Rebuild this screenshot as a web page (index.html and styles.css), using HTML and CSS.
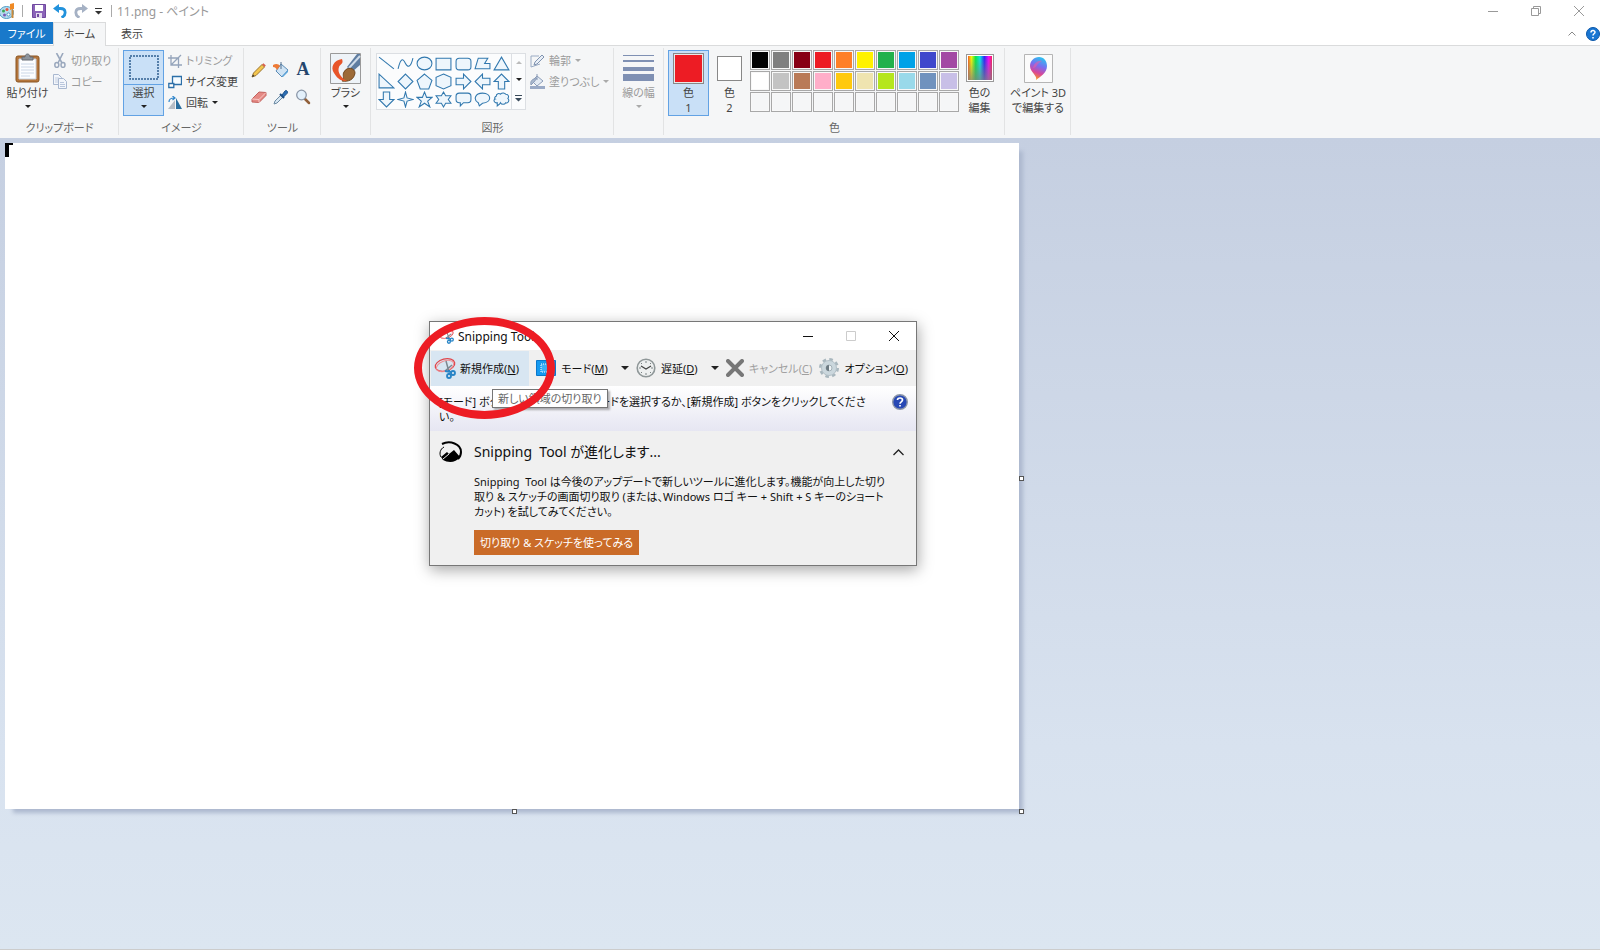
FILE: index.html
```html
<!DOCTYPE html>
<html lang="ja">
<head>
  <meta charset="UTF-8" />
  <meta name="viewport" content="width=device-width, initial-scale=1.0"/>
  <title>11.png - ペイント</title>
  <link rel="stylesheet" href="styles.css">
</head>
<body>

<header class="titlebar">
  <svg class="app-icon" width="16" height="18" viewBox="0 0 16 18">
    <ellipse cx="6.5" cy="10.5" rx="7" ry="6" fill="#b7dbee" stroke="#4d9cc6"/>
    <circle cx="3.5" cy="9" r="1.5" fill="#3aa655"/><circle cx="7" cy="7.5" r="1.5" fill="#e5533c"/>
    <circle cx="4.5" cy="13" r="1.5" fill="#7c58b5"/><circle cx="8.5" cy="12.5" r="1.6" fill="#fff" stroke="#4d9cc6"/>
    <path d="M12.5 8v8" stroke="#c98a3d" stroke-width="2"/><path d="M10 2l4-1v6l-4 1z" fill="#f08a24"/>
  </svg>
  <span class="divider"></span>
  <button class="quick" aria-label="保存">
    <svg width="14" height="14" viewBox="0 0 14 14"><path d="M.5 .5h13v13H.5z" fill="#8a63b8" stroke="#70499f"/><path d="M3 1h8v6H3z" fill="#fff"/><path d="M4 9h6v5H4z" fill="#e4dcee"/><path d="M5 10h2v3H5z" fill="#70499f"/></svg>
  </button>
  <button class="quick" aria-label="元に戻す">
    <svg width="14" height="14" viewBox="0 0 14 14"><path d="M3 4.500h4.500c6 0 6 7 1 9" fill="none" stroke="#2292dc" stroke-width="2.800"/><path d="M0 4.500L6 0v9z" fill="#2292dc"/></svg>
  </button>
  <button class="quick" aria-label="やり直し">
    <svg width="14" height="14" viewBox="0 0 14 14"><path d="M11 4.500H6.500c-6 0-6 7-1 9" fill="none" stroke="#a5b1c4" stroke-width="2.800"/><path d="M14 4.500L8 0v9z" fill="#a5b1c4"/></svg>
  </button>
  <button class="quick narrow" aria-label="カスタマイズ">
    <svg width="7" height="7" viewBox="0 0 7 7"><path d="M0 0h7v1H0zM0 3h7L3.500 6.500z" fill="#333"/></svg>
  </button>
  <span class="divider"></span>
  <span class="doc-title">11.png - ペイント</span>
  <div class="window-buttons">
    <button aria-label="最小化"><svg width="10" height="10" viewBox="0 0 10 10"><path d="M0 5.500h10"/></svg></button>
    <button aria-label="元のサイズ"><svg width="10" height="10" viewBox="0 0 10 10"><path d="M.5 2.500h7v7h-7zM2.500 2.500v-2h7v7h-2"/></svg></button>
    <button aria-label="閉じる"><svg width="10" height="10" viewBox="0 0 10 10"><path d="M0 0l10 10M10 0L0 10"/></svg></button>
  </div>
</header>

<nav class="tabs">
  <button class="tab file">ファイル</button>
  <button class="tab active">ホーム</button>
  <button class="tab">表示</button>
  <div class="tabs-right">
    <button aria-label="リボンの折りたたみ"><svg width="8" height="5" viewBox="0 0 8 5"><path d="M.5 4.500L4 1l3.500 3.500" fill="none" stroke="#888"/></svg></button>
    <button aria-label="ヘルプ"><svg width="14" height="14" viewBox="0 0 14 14"><circle cx="7" cy="7" r="6.500" fill="#1976d2" stroke="#0b57a8"/><path d="M5 5.500C5 3 9 3 9 5.300 9 6.800 7 6.800 7 8.500M7 10v1.500" fill="none" stroke="#fff" stroke-width="1.500"/></svg></button>
  </div>
</nav>

<section class="ribbon">
  <div class="group clipboard">
    <div class="group-body">
      <button class="big">
        <span class="big-icon"><svg width="26" height="30" viewBox="0 0 26 30"><rect x="1" y="3" width="23" height="26" rx="2" fill="#b5763c" stroke="#8a5522"/><path d="M4 6h17v20H4z" fill="#fcfdff" stroke="#c9d2df"/><path d="M6 11h13M6 14h13M6 17h13M6 20h13M6 23h9" stroke="#cbd6e6"/><path d="M7 7V4h3c0-4 5-4 5 0h3v3z" fill="#8d949c" stroke="#666c74"/></svg></span>
        <span>貼り付け</span>
        <i class="caret"></i>
      </button>
      <div class="rows">
        <button class="row off"><svg width="14" height="15" viewBox="0 0 14 15"><path d="M3.500 0L9 10M10 0L5 10" stroke="#9aa8bd" stroke-width="1.600"/><ellipse cx="3.800" cy="12" rx="2" ry="2.400" fill="none" stroke="#9aa8bd" stroke-width="1.500"/><ellipse cx="10" cy="12" rx="2" ry="2.400" fill="none" stroke="#9aa8bd" stroke-width="1.500"/></svg>切り取り</button>
        <button class="row off"><svg width="14" height="15" viewBox="0 0 14 15"><path d="M.5 .5h5l3 3v7h-8z" fill="#f3f6fb" stroke="#a9b8d0"/><path d="M2 4h4M2 6h4M2 8h3" stroke="#c5d0e2"/><path d="M5.500 4.500h5l3 3v7h-8z" fill="#f3f6fb" stroke="#a9b8d0"/><path d="M7 8.500h4M7 10.500h5M7 12.500h5" stroke="#b9c6dc"/></svg>コピー</button>
      </div>
    </div>
    <div class="group-name">クリップボード</div>
  </div>

  <div class="group image">
    <div class="group-body">
      <button class="big selected split">
        <span class="big-icon"><svg width="30" height="25" viewBox="0 0 30 25"><path d="M1 1h28v23H1z" fill="none" stroke="#2f5f91" stroke-width="1.500" stroke-dasharray="2 1"/></svg></span>
        <span>選択</span>
        <i class="caret"></i>
      </button>
      <div class="rows">
        <button class="row off"><svg width="14" height="14" viewBox="0 0 14 14"><path d="M3 1v10h11M0 4h10.500v10M3 11L13 1" fill="none" stroke="#94a4bb" stroke-width="1.300"/></svg>トリミング</button>
        <button class="row"><svg width="14" height="14" viewBox="0 0 14 14"><path d="M4.500 1.500h9v8h-9z" fill="#f5fbff" stroke="#2c6fa8" stroke-width="1.300"/><path d="M.8 8.500h5v4h-5z" fill="#fff" stroke="#2c6fa8" stroke-width="1.300"/></svg>サイズ変更</button>
        <button class="row"><svg width="14" height="14" viewBox="0 0 14 14"><path d="M7 4v9H0z" fill="#b7bdc5"/><path d="M8 2l6 11H8z" fill="#2c6f9f"/><path d="M1 6c0-3 2-4 5-4M4.500 0L7 2 4.500 4" fill="none" stroke="#3186cb" stroke-width="1.200"/></svg>回転<i class="caret"></i></button>
      </div>
    </div>
    <div class="group-name">イメージ</div>
  </div>

  <div class="group tools">
    <div class="group-body tool-grid">
      <button aria-label="鉛筆"><svg width="16" height="16" viewBox="0 0 16 16"><path d="M1 15l1.500-4L11 2.500l2.500 2.500L5 13.500z" fill="#f4c64e" stroke="#9a7431"/><path d="M11 2.500l1.500-1.300 2.300 2.300L13.500 5z" fill="#d8604e"/><path d="M1 15l1-2.500L3.500 14z" fill="#333"/></svg></button>
      <button aria-label="塗りつぶし"><svg width="16" height="16" viewBox="0 0 16 16"><path d="M8 2l7 6-6 7-6-6z" fill="#cfe3f4" stroke="#5b8bb5"/><path d="M0 3c3-2 6-1 7 1L4 8c-1-2-2-3-4-3z" fill="#ee7a35"/><path d="M8 0v7" stroke="#55718e"/><path d="M9 14l6-6v2l-5 5z" fill="#5ca5dc"/></svg></button>
      <button class="letter" aria-label="テキスト">A</button>
      <button aria-label="消しゴム"><svg width="16" height="16" viewBox="0 0 16 16"><path d="M1 10l7-7 7 .5v3l-7 7-7-.5z" fill="#e58984" stroke="#c2635f"/><path d="M1 10l7 .5 7-7M8 10.500v3" fill="none" stroke="#f7c8c5"/></svg></button>
      <button aria-label="色の選択"><svg width="16" height="16" viewBox="0 0 16 16"><path d="M1 15l1-3 6-6 2 2-6 6z" fill="#d8e7f2" stroke="#6d8ba4"/><path d="M7 5l4 4" stroke="#1c4f86" stroke-width="2"/><path d="M9 6l3-4c1-1.500 3.500.5 2.200 2.300L10.500 8z" fill="#2a6db5" stroke="#1c4f86"/></svg></button>
      <button aria-label="拡大鏡"><svg width="16" height="16" viewBox="0 0 16 16"><path d="M10 10l4 4" stroke="#91603a" stroke-width="2.500" stroke-linecap="round"/><circle cx="6.500" cy="6" r="4.800" fill="#e3f0fb" stroke="#8b97a8" stroke-width="1.300"/></svg></button>
    </div>
    <div class="group-name">ツール</div>
  </div>

  <div class="group brush">
    <div class="group-body">
      <button class="big">
        <span class="big-icon"><svg width="31" height="31" viewBox="0 0 31 31"><path d="M.5 .5h30v30H.5z" fill="#eef3f8" stroke="#9a9a9a"/><path d="M30 4v8l-8 7-5-5L27 1h3z" fill="#5f7da1"/><path d="M30 3L19 15" stroke="#cfdcea" stroke-width="2"/><path d="M14 19c3-6 11-4 11 1-1 7-7 9-13 8 3-3 0-6 2-9z" fill="#9c6a38" stroke="#714820"/><path d="M12 6C4 7 0 14 4 20c4 7 8 8 13 8-6-3-10-9-8-14 1-3 5-3 3-8z" fill="#e8552a"/></svg></span>
        <span>ブラシ</span>
        <i class="caret"></i>
      </button>
    </div>
  </div>

  <div class="group shapes">
    <div class="group-body">
      <div class="shape-box">
        <div class="shape-grid">
          <button aria-label="直線"><svg viewBox="0 0 16 16"><path d="M1 2l14 11"/></svg></button>
          <button aria-label="曲線"><svg viewBox="0 0 16 16"><path d="M1 13C4 1 6 4 8 8s5 4 7-5"/></svg></button>
          <button aria-label="楕円"><svg viewBox="0 0 16 16"><ellipse cx="8" cy="8" rx="7" ry="6"/></svg></button>
          <button aria-label="四角形"><svg viewBox="0 0 16 16"><path d="M1 3h14v11H1z"/></svg></button>
          <button aria-label="角丸四角形"><svg viewBox="0 0 16 16"><rect x="1" y="3" width="14" height="11" rx="3"/></svg></button>
          <button aria-label="多角形"><svg viewBox="0 0 16 16"><path d="M4 3h9l-3 5h5v5H1z"/></svg></button>
          <button aria-label="三角形"><svg viewBox="0 0 16 16"><path d="M8 2l7 12H1z"/></svg></button>
          <button aria-label="直角三角形"><svg viewBox="0 0 16 16"><path d="M1 1l14 13H1z"/></svg></button>
          <button aria-label="ひし形"><svg viewBox="0 0 16 16"><path d="M8 1l7 7-7 7-7-7z"/></svg></button>
          <button aria-label="五角形"><svg viewBox="0 0 16 16"><path d="M8 1l7 6-3 8H4L1 7z"/></svg></button>
          <button aria-label="六角形"><svg viewBox="0 0 16 16"><path d="M8 1l7 3v8l-7 3-7-3V4z"/></svg></button>
          <button aria-label="右矢印"><svg viewBox="0 0 16 16"><path d="M1 5h7V1l7 7-7 7v-4H1z"/></svg></button>
          <button aria-label="左矢印"><svg viewBox="0 0 16 16"><path d="M15 5H8V1L1 8l7 7v-4h7z"/></svg></button>
          <button aria-label="上矢印"><svg viewBox="0 0 16 16"><path d="M5 15V8H1l7-7 7 7h-4v7z"/></svg></button>
          <button aria-label="下矢印"><svg viewBox="0 0 16 16"><path d="M5 1v7H1l7 7 7-7h-4V1z"/></svg></button>
          <button aria-label="四方星"><svg viewBox="0 0 16 16"><path d="M8 1l1.500 5.500L15 8l-5.500 1.500L8 15l-1.500-5.500L1 8l5.500-1.500z"/></svg></button>
          <button aria-label="五方星"><svg viewBox="0 0 16 16"><path d="M8 1l2 5h5l-4 3.500 2 5.500-5-3.500L3 15l2-5.500L1 6h5z"/></svg></button>
          <button aria-label="六方星"><svg viewBox="0 0 16 16"><path d="M8 1l2 3.500h5L12.500 8l2.500 3.500h-5L8 15l-2-3.500H1L3.500 8 1 4.500h5z"/></svg></button>
          <button aria-label="角丸吹き出し"><svg viewBox="0 0 16 16"><path d="M4 2h8c2 0 3 1 3 3v3c0 2-1 3-3 3H8l-3 3v-3H4c-2 0-3-1-3-3V5c0-2 1-3 3-3z"/></svg></button>
          <button aria-label="円形吹き出し"><svg viewBox="0 0 16 16"><path d="M5 14l-1-3C-1 8 1 2 8 2c9 0 9 9 0 9.500z"/></svg></button>
          <button aria-label="雲形吹き出し"><svg viewBox="0 0 16 16"><path d="M3 5c0-3 3-3 4-2 2-2 4-1 5 0 3 0 3 3 2 4 2 2 0 5-2 4-1 2-4 2-5 0-1 2-2 2-3 3V11C1 12 0 8 2 7.500 1 7 2 5 3 5z"/></svg></button>
        </div>
        <div class="shape-scroll">
          <button class="off" aria-label="上へ"><i class="caret up"></i></button>
          <button aria-label="下へ"><i class="caret"></i></button>
          <button aria-label="その他"><svg width="7" height="7" viewBox="0 0 7 7"><path d="M0 0h7v1H0zM0 3h7L3.500 6.500z" fill="#3a4a5a"/></svg></button>
        </div>
      </div>
      <div class="rows">
        <button class="row off"><svg width="15" height="14" viewBox="0 0 15 14"><path d="M9 2H1v11l9-3" fill="none" stroke="#9aabc4"/><path d="M4 11l1-3 7-7 2 2-7 7z" fill="#e9eff7" stroke="#8093b0"/></svg>輪郭<i class="caret"></i></button>
        <button class="row off"><svg width="15" height="15" viewBox="0 0 15 15"><path d="M0 12h15v3H0z" fill="#9aaac6"/><path d="M7 2l6 5-6 5-5-5z" fill="#e3eaf3" stroke="#8b9cb8"/><path d="M1 11c-1-4 1-6 6-7L4 8zM7 0v6" fill="#a9b8ce" stroke="#8b9cb8"/></svg>塗りつぶし<i class="caret"></i></button>
      </div>
    </div>
    <div class="group-name">図形</div>
  </div>

  <div class="group line-width">
    <div class="group-body">
      <button class="big off">
        <span class="big-icon"><svg width="31" height="28" viewBox="0 0 31 28"><path d="M0 1h31v1H0zM0 6h31v2H0zM0 13h31v4H0zM0 20h31v7H0z" fill="#7f90b3"/></svg></span>
        <span>線の幅</span>
        <i class="caret"></i>
      </button>
    </div>
  </div>

  <div class="group colors">
    <div class="group-body">
      <button class="big selected"><span class="big-icon"><b class="color-chip one"></b></span><span>色</span><span>1</span></button>
      <button class="big"><span class="big-icon"><b class="color-chip two"></b></span><span>色</span><span>2</span></button>
      <div class="palette">
        <button class="black" aria-label="黒"></button><button class="gray" aria-label="灰色"></button><button class="maroon" aria-label="濃い赤"></button><button class="red" aria-label="赤"></button><button class="orange" aria-label="オレンジ"></button><button class="yellow" aria-label="黄"></button><button class="green" aria-label="緑"></button><button class="turquoise" aria-label="青緑"></button><button class="indigo" aria-label="藍色"></button><button class="purple" aria-label="紫"></button>
        <button class="white" aria-label="白"></button><button class="silver" aria-label="明るい灰色"></button><button class="brown" aria-label="茶"></button><button class="rose" aria-label="ローズ"></button><button class="gold" aria-label="金"></button><button class="cream" aria-label="薄い黄"></button><button class="lime" aria-label="ライム"></button><button class="sky" aria-label="薄い青緑"></button><button class="slate" aria-label="青灰色"></button><button class="lavender" aria-label="ラベンダー"></button>
        <button aria-label="空き"></button><button aria-label="空き"></button><button aria-label="空き"></button><button aria-label="空き"></button><button aria-label="空き"></button><button aria-label="空き"></button><button aria-label="空き"></button><button aria-label="空き"></button><button aria-label="空き"></button><button aria-label="空き"></button>
      </div>
      <button class="big"><span class="big-icon"><b class="spectrum"></b></span><span>色の</span><span>編集</span></button>
    </div>
    <div class="group-name">色</div>
  </div>

  <div class="group paint3d">
    <div class="group-body">
      <button class="big">
        <span class="big-icon"><svg width="29" height="29" viewBox="0 0 29 29">
          <defs><linearGradient id="drop" x1="0.700" y1="0" x2="0.400" y2="1"><stop offset="0" stop-color="#25c8f0"/><stop offset=".4" stop-color="#7a6cf0"/><stop offset=".7" stop-color="#d8479a"/><stop offset="1" stop-color="#f9a01b"/></linearGradient></defs>
          <path d="M.5 .5h28v28H.5z" fill="#fbfbfb" stroke="#b5b5b5"/><path d="M12 26c2-4-6-8-6-14 0-5 4-9 9-9s8 4 8 9c0 7-7 11-11 14z" fill="url(#drop)"/><path d="M9 14c1-5 5-8 9-7-5 2-5 7-9 7z" fill="#e65ba8" opacity=".6"/></svg></span>
        <span>ペイント 3D</span><span>で編集する</span>
      </button>
    </div>
  </div>
</section>

<main class="workspace">
  <div class="canvas">
    <span class="ink"></span>
    <span class="handle right"></span>
    <span class="handle bottom"></span>
    <span class="handle corner"></span>
  </div>

  <div class="snip">
    <div class="snip-title">
      <svg width="16" height="16" viewBox="0 0 22 22"><use href="#scissors"/></svg>
      <span>Snipping Tool</span>
      <div class="snip-window-buttons">
        <button aria-label="最小化"><svg width="11" height="11" viewBox="0 0 11 11"><path d="M0 5.500h10"/></svg></button>
        <button aria-label="最大化" disabled><svg width="11" height="11" viewBox="0 0 11 11"><path d="M.5 .5h9v9h-9z"/></svg></button>
        <button aria-label="閉じる"><svg width="11" height="11" viewBox="0 0 11 11"><path d="M0 0l10 10M10 0L0 10"/></svg></button>
      </div>
    </div>

    <div class="snip-bar">
      <button class="new">
        <svg width="22" height="22" viewBox="0 0 22 22"><g id="scissors"><ellipse cx="11" cy="8" rx="10" ry="6" fill="none" stroke="#e0444a" stroke-width="1.200" transform="rotate(-14 11 8)"/><ellipse cx="11" cy="9" rx="9" ry="5" fill="none" stroke="#ee9095" transform="rotate(-20 11 9)"/><path d="M12 4l3 11M18 8l-7 6" stroke="#7d8890" stroke-width="1.500"/><circle cx="19" cy="16" r="2" fill="none" stroke="#2784c6" stroke-width="1.800"/><circle cx="15" cy="19" r="2" fill="none" stroke="#2784c6" stroke-width="1.800"/><path d="M11 14l6 1M15 13v4" stroke="#2784c6" stroke-width="2"/></g></svg>
        <span>新規作成(<u>N</u>)</span>
      </button>
      <button class="mode">
        <svg width="20" height="16" viewBox="0 0 20 16"><path d="M.5 .5h19v15H.5z" fill="#169af0" stroke="#0b78cc"/><path d="M5 4h10v8H5z" fill="#3cb0f8" stroke="#fff" stroke-dasharray="1 1"/></svg>
        <span>モード(<u>M</u>)</span><i class="caret"></i>
      </button>
      <button class="delay">
        <svg width="20" height="20" viewBox="0 0 20 20"><circle cx="10" cy="10" r="8.800" fill="#eef0f0" stroke="#8f9798" stroke-width="1.600"/><path d="M10 3v2M10 15v2M3 10h2M15 10h2M5 5l1 1M15 5l-1 1M5 15l1-1M15 15l-1-1" stroke="#7b8384"/><path d="M5 8l5 3 5-3" fill="none" stroke="#444" stroke-width="1.200"/></svg>
        <span>遅延(<u>D</u>)</span><i class="caret"></i>
      </button>
      <button class="cancel" disabled>
        <svg width="18" height="18" viewBox="0 0 18 18"><path d="M2 2l14 14M16 2L2 16" stroke="#777" stroke-width="4" stroke-linecap="round"/></svg>
        <span>キャンセル(<u>C</u>)</span>
      </button>
      <button class="options">
        <svg width="20" height="22" viewBox="0 0 20 22"><circle cx="10" cy="11" r="8.500" fill="none" stroke="#a9b7be" stroke-width="3" stroke-dasharray="3.500 3.180"/><circle cx="10" cy="11" r="7.500" fill="#cbd7dd" stroke="#b3c0c7"/><circle cx="10" cy="11" r="3" fill="#eef3f5" stroke="#a3b0b7"/><path d="M10 8a3 3 0 0 0 0 6z" fill="#6b7981"/></svg>
        <span>オプション(<u>O</u>)</span>
      </button>
    </div>

    <div class="snip-info">
      <p>[モード] ボタンを使って切り取りモードを選択するか、[新規作成] ボタンをクリックしてくださ<br>い。</p>
      <button aria-label="ヘルプ"><svg width="16" height="16" viewBox="0 0 16 16"><circle cx="8" cy="8" r="7.300" fill="#2748b5" stroke="#8c96a8" stroke-width="1.400"/><path d="M5.500 6C5.500 3.300 10.500 3.300 10.500 6 10.500 8 8 7.800 8 9.800M8 11v1.600" fill="none" stroke="#fff" stroke-width="1.700"/></svg></button>
    </div>

    <div class="snip-news">
      <svg width="24" height="22" viewBox="0 0 24 22"><path d="M3 3C11-1 22 3 22 11c0 3-1 5-3 7" fill="none" stroke="#000" stroke-width="2"/><path d="M5 6C1 8 0 13 2 16" fill="none" stroke="#000"/><path d="M2 16l6-5 2 2 5-4 6 7c-4 6-12 6-17 3z" fill="#000"/><path d="M4 18l6-5" stroke="#efefef"/></svg>
      <div class="news-text">
        <h2>Snipping&nbsp; Tool が進化します...</h2>
        <p>Snipping&nbsp; Tool は今後のアップデートで新しいツールに進化します。機能が向上した切り<br>取り &amp; スケッチの画面切り取り (または、Windows ロゴ キー + Shift + S キーのショート<br>カット) を試してみてください。</p>
        <button class="try">切り取り &amp; スケッチを使ってみる</button>
      </div>
      <button class="fold" aria-label="折りたたむ"><svg width="11" height="7" viewBox="0 0 11 7"><path d="M.5 6l5-5 5 5" fill="none" stroke="#222" stroke-width="1.300"/></svg></button>
    </div>

    <div class="tooltip" role="tooltip">新しい領域の切り取り</div>
    <div class="marker"></div>
  </div>
</main>

</body>
</html>
```
FILE: styles.css
```css
* { box-sizing: border-box; margin: 0; padding: 0; }
body {
  display: flex; flex-direction: column; min-height: 100vh;
  background: white; color: #444;
  font: 11px/15px "Noto Sans", "Noto Sans CJK JP", sans-serif;
  font-feature-settings: "palt";
}
button {
  font: inherit; font-feature-settings: inherit; color: inherit;
  background: none; border: none; white-space: nowrap;
}
svg { flex: none; display: block; }

.caret {
  flex: none; width: 0; height: 0;
  border: 3px solid transparent; border-top-color: #222; border-bottom: none;
}
.caret.up { border-top: none; border-bottom: 3px solid #bbb; }

/* title bar */
.titlebar { display: flex; align-items: center; height: 22px; }
.divider { width: 1px; height: 12px; background: #aaa; margin: 0 5px 0 6px; }
.quick { display: flex; justify-content: center; width: 21px; }
.quick.narrow { width: 14px; }
.doc-title { font-size: 12px; color: #999; }
.window-buttons { display: flex; margin-left: auto; }
.window-buttons button { display: flex; align-items: center; justify-content: center; width: 43px; height: 20px; }
.window-buttons svg { fill: none; stroke: #999; }

/* tabs */
.tabs { display: flex; height: 24px; border-bottom: 1px solid #dadbdc; }
.tab { height: 22px; width: 52px; }
.tab.file { width: 53px; background: #1979ca; color: white; }
.tab.active { width: 53px; height: 24px; padding-bottom: 2px; background: #f5f6f7; border: 1px solid #dadbdc; border-bottom: none; }
.tabs-right { display: flex; align-items: center; gap: 10px; margin-left: auto; }

/* ribbon */
.ribbon { display: flex; height: 92px; background: #f5f6f7; }
.group {
  display: flex; flex-direction: column; justify-content: space-between;
  padding: 4px 4px 1px; position: relative; flex: none;
}
.group::after {
  content: ""; position: absolute; right: 0; top: 2px; bottom: 3px;
  width: 1px; background: #e2e3e4;
}
.group-body { display: flex; height: 66px; }
.group-name { text-align: center; line-height: 18px; color: #666; }
.clipboard { width: 119px; }
.image { width: 125px; }
.tools { width: 77px; }
.brush { width: 50px; }
.shapes { width: 243px; }
.line-width { width: 50px; }
.colors { width: 341px; }
.paint3d { width: 66px; }

.big {
  display: flex; flex-direction: column; align-items: center;
  width: 41px; height: 66px; flex: none; border: 1px solid transparent;
}
.clipboard .big { width: 47px; }
.paint3d .big { width: 58px; }
.big-icon { display: flex; align-items: center; justify-content: center; height: 34px; }
.big .caret { margin-top: 5px; }
.big.selected { background: #c9e0f7; border-color: #62a2e4; }
.big.split .big-icon { align-self: stretch; border-bottom: 1px solid #62a2e4; }

.rows { display: flex; flex-direction: column; margin-left: 4px; }
.clipboard .rows { margin-left: 2px; }
.row { display: flex; align-items: center; gap: 4px; height: 21px; }
.off { color: #9b9b9b; }
.off .caret { border-top-color: #aaa; }

.tool-grid {
  display: grid; grid-template-columns: repeat(3, 22px);
  grid-auto-rows: 27px; padding-top: 6px;
}
.tool-grid button { display: flex; align-items: center; justify-content: center; }
.tool-grid .letter { font: bold 18px "Liberation Serif", serif; color: #24466e; }

.shape-box { display: flex; flex: none; width: 150px; height: 57px; margin: 3px 0 0 1px; border: 1px solid #dcdfe3; background: #fbfcfd; }
.shape-grid { display: grid; grid-template-columns: repeat(7, 1fr); flex: 1; }
.shape-grid button { display: flex; align-items: center; justify-content: center; }
.shape-grid svg { width: 17px; height: 17px; fill: #eef6fc; stroke: #3178ae; stroke-width: 1; }
.shape-grid button:nth-child(-n+2) svg { fill: none; }
.shape-scroll { display: grid; width: 14px; border-left: 1px solid #dcdfe3; }
.shape-scroll button { display: flex; align-items: center; justify-content: center; }

/* colours */
.color-chip { width: 25px; height: 25px; border: 1px solid #888; background: white; }
.color-chip.one { width: 31px; height: 31px; background: #ed1c24; box-shadow: inset 0 0 0 1px #e8e8e8; }
.palette { display: grid; grid-template-columns: repeat(10, 20px); grid-auto-rows: 20px; gap: 1px; }
.palette button { border: 1px solid #a8a8a8; box-shadow: inset 0 0 0 1px #f8f8f8; }
.spectrum {
  width: 28px; height: 28px; border: 1px solid #999; box-shadow: inset 0 0 0 1px white;
  background: linear-gradient(transparent, #808080cc), linear-gradient(90deg, #f22, #ff0, #0e4, #0ee, #22f, #f0f, #f22);
}
.black { background: #000; }
.gray { background: #7f7f7f; }
.maroon { background: #880015; }
.red { background: #ed1c24; }
.orange { background: #ff7f27; }
.yellow { background: #fff200; }
.green { background: #22b14c; }
.turquoise { background: #00a2e8; }
.indigo { background: #3f48cc; }
.purple { background: #a349a4; }
.white { background: #fff; }
.silver { background: #c3c3c3; }
.brown { background: #b97a57; }
.rose { background: #ffaec9; }
.gold { background: #ffc90e; }
.cream { background: #efe4b0; }
.lime { background: #b5e61d; }
.sky { background: #99d9ea; }
.slate { background: #7092be; }
.lavender { background: #c8bfe7; }

/* workspace */
.workspace {
  flex: 1; position: relative; padding: 5px; margin-bottom: 1px;
  background: linear-gradient(#c5cfe1, #d8e2ef 75%, #dce6f1);
  border-bottom: 1px solid #ccc;
}
.canvas { position: relative; width: 63.8%; aspect-ratio: 1014 / 666; background: white; box-shadow: 6px 6px 4px -2px #adb9cf; }
.ink { position: absolute; left: 0; top: 0; width: 8px; height: 14px; border: solid black; border-width: 2px 0 0 4px; }
.handle { position: absolute; width: 5px; height: 5px; border: 1px solid #555; background: white; }
.handle.right { right: -5px; top: 50%; }
.handle.bottom { left: 50%; bottom: -5px; }
.handle.corner { right: -5px; bottom: -5px; }

/* snipping tool window */
.snip {
  position: absolute; left: 429px; top: 183px; width: 488px;
  background: #f0f0f0; color: #111; border: 1px solid #777;
  box-shadow: 1px 4px 14px rgba(0,0,0,0.35);
}
.snip-title { display: flex; align-items: center; gap: 4px; height: 28px; padding-left: 8px; background: white; font-size: 12px; }
.snip-window-buttons { display: flex; margin-left: auto; }
.snip-window-buttons button { display: flex; align-items: center; justify-content: center; width: 43px; height: 27px; }
.snip-window-buttons svg { fill: none; stroke: #111; }
.snip-window-buttons button:disabled svg { stroke: #ccc; }
.snip-bar { display: flex; align-items: center; justify-content: space-between; height: 36px; padding: 0 8px 0 1px; }
.snip-bar button { display: flex; align-items: center; gap: 5px; height: 35px; }
.snip-bar .caret { border-width: 4px 4px 0; margin-left: 8px; }
.snip-bar .new { width: 98px; padding-left: 3px; gap: 4px; background: #d8e6f2; }
.snip-bar .cancel { color: #a0a0a0; }
.snip-info {
  display: flex; align-items: flex-start; justify-content: space-between;
  height: 45px; padding: 8px 8px 0 9px;
  background: linear-gradient(white, #e6e6f2);
}
.snip-info p { white-space: nowrap; }
.snip-news { display: flex; align-items: flex-start; padding: 10px 12px 10px 9px; }
.news-text { flex: 1; margin-left: 11px; }
.news-text h2 { font-size: 14px; line-height: 22px; font-weight: normal; margin-bottom: 11px; }
.news-text p { white-space: nowrap; }
.try { display: block; height: 25px; margin-top: 11px; padding: 0 6px; background: #ca6b28; color: white; }
.fold { margin-top: 8px; }
.tooltip {
  position: absolute; left: 62px; top: 67px; padding: 0 5px; height: 19px; line-height: 17px;
  border: 1px solid #767676; background: white; color: #666; white-space: nowrap;
  box-shadow: 2px 2px 2px rgba(0,0,0,0.3);
}
.marker { position: absolute; left: -16px; top: -5px; width: 141px; height: 102px; border: 8px solid #ed1c24; border-radius: 50%; }
```
